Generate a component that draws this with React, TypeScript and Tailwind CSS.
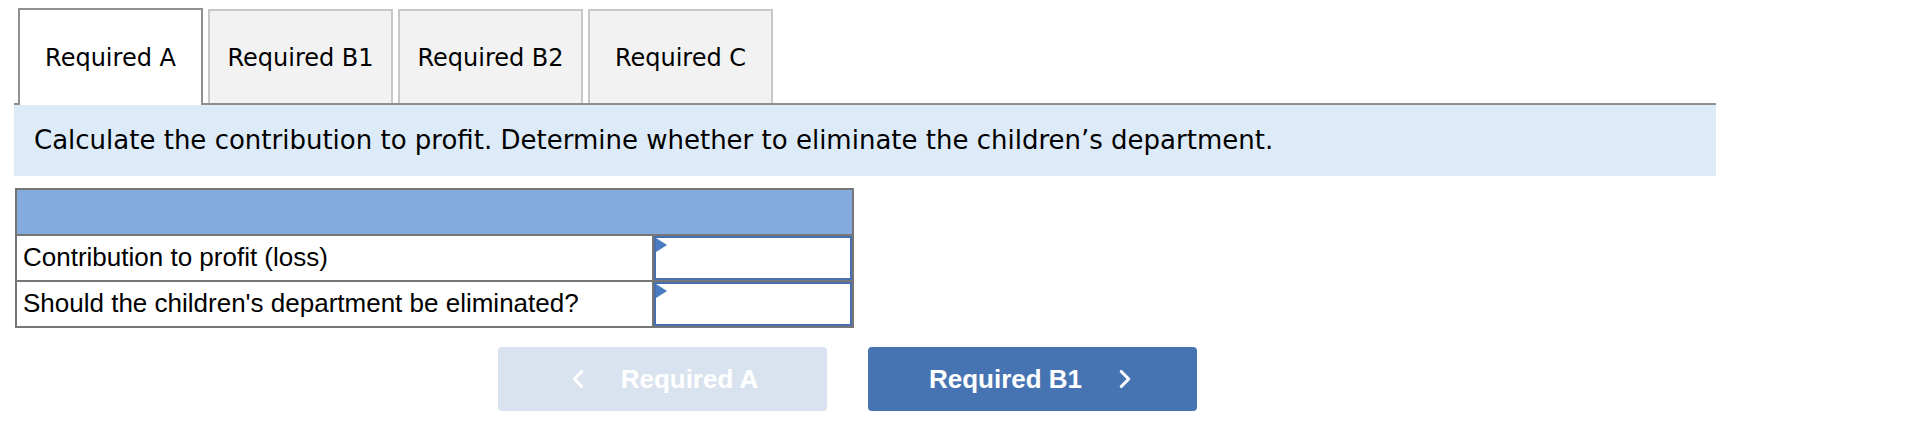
import { ChevronLeft, ChevronRight } from 'lucide-react';

const tabs = ['Required A', 'Required B1', 'Required B2', 'Required C'];

export default function App() {
  const active = 0;

  return (
    <div className="w-[1918px] h-[432px] bg-white pt-[8px] pl-[14px]">
      {/* tab strip + instructions */}
      <div className="w-[1702px]">
        <div className="flex items-end gap-[5px] pl-[4px] border-b-2 border-[#8f8f8f] font-['Verdana','DejaVu_Sans',sans-serif] text-[24px] text-black">
          {tabs.map((t, i) =>
            i === active ? (
              <div
                key={t}
                className="w-[185px] h-[97px] -mb-[2px] flex items-center justify-center bg-white border-2 border-b-0 border-[#8f8f8f]"
              >
                {t}
              </div>
            ) : (
              <div
                key={t}
                className="w-[185px] h-[94px] flex items-center justify-center bg-[#f2f2f2] border-2 border-b-0 border-[#c8c8c8] pt-[2px]"
              >
                {t}
              </div>
            )
          )}
        </div>
        <div className="h-[71px] bg-[#ddebf8] flex items-center pl-[20px] font-['Verdana','DejaVu_Sans',sans-serif] text-[26px] text-black">
          Calculate the contribution to profit. Determine whether to eliminate the children’s department.
        </div>
      </div>

      {/* answer table */}
      <table className="mt-[12px] ml-[1px] border-collapse font-['Arial','Liberation_Sans',sans-serif] text-[26px] text-black">
        <tbody>
          <tr>
            <td colSpan={2} className="h-[46px] bg-[#84abde] border-2 border-[#767676]"></td>
          </tr>
          {['Contribution to profit (loss)', "Should the children's department be eliminated?"].map((label) => (
            <tr key={label}>
              <td className="w-[637px] h-[46px] border-2 border-[#767676] pl-[6px] pb-[3px] leading-none">{label}</td>
              <td className="w-[200px] h-[46px] border-2 border-[#767676] p-0">
                <div className="relative h-[44px] border-2 border-[#4670b0] bg-white">
                  <div className="absolute left-0 top-0 w-0 h-0 border-t-[7px] border-b-[7px] border-l-[11px] border-t-transparent border-b-transparent border-l-[#4a7ac0]" />
                </div>
              </td>
            </tr>
          ))}
        </tbody>
      </table>

      {/* prev / next */}
      <div className="mt-[19px] ml-[484px] flex gap-[41px] font-['Arial','Liberation_Sans',sans-serif] text-[26px] font-bold text-white">
        <button className="w-[329px] h-[64px] rounded-[4px] bg-[#d9e3ef] flex items-center justify-center gap-[28px] pr-[4px]">
          <ChevronLeft size={30} strokeWidth={2.5} />
          <span>Required A</span>
        </button>
        <button className="w-[329px] h-[64px] rounded-[4px] bg-[#4674b3] flex items-center justify-center gap-[28px] pl-[4px]">
          <span>Required B1</span>
          <ChevronRight size={30} strokeWidth={2.5} />
        </button>
      </div>
    </div>
  );
}
